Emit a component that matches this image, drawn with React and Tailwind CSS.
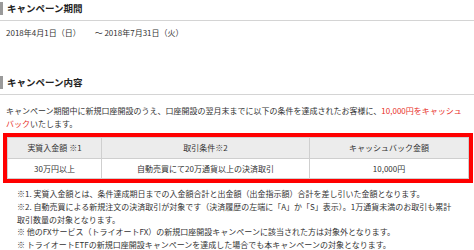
import React from 'react';

// Section heading with left grey bar and bottom rule
const Heading = ({ children }) => (
  <div className="h-[21px] border-b border-[#d4d4d4] pt-[2px]">
    <div className="h-[13px] border-l-[3px] border-[#9a9a9a] pl-[4px] text-[9.5px] leading-[13px] font-bold text-[#222]">
      {children}
    </div>
  </div>
);

const notes = [
  '※1. 実質入金額とは、条件達成期日までの入金額合計と出金額（出金指示額）合計を差し引いた金額となります。',
  '※2. 自動売買による新規注文の決済取引が対象です（決済履歴の左端に「A」か「S」表示）。1万通貨未満のお取引も累計',
  '取引数量の対象となります。',
  '※ 他のFXサービス（トライオートFX）の新規口座開設キャンペーンに該当された方は対象外となります。',
  '※ トライオートETFの新規口座開設キャンペーンを達成した場合でも本キャンペーンの対象となります。',
];

function App() {
  return (
    <div
      className="w-[474px] h-[250px] overflow-hidden bg-white text-[#333]"
      style={{ fontFamily: '"Noto Sans CJK JP", "Noto Sans", sans-serif' }}
    >
      <Heading>キャンペーン期間</Heading>
      <div className="mt-[6px] pl-[6px] text-[8px] leading-[12px] whitespace-nowrap">
        2018年4月1日（日）<span className="inline-block w-[14px]" />～ 2018年7月31日（火）
      </div>

      <div className="mt-[35px]">
        <Heading>キャンペーン内容</Heading>
      </div>
      <p className="mt-[9px] pl-[6px] text-[8px] leading-[13px] whitespace-nowrap">
        キャンペーン期間中に新規口座開設のうえ、口座開設の翌月末までに以下の条件を達成されたお客様に、
        <span className="text-[#e8302a]">10,000円をキャッシュ</span>
        <br />
        <span className="text-[#e8302a]">バック</span>いたします。
      </p>

      <div className="mt-[3px] ml-[3px] w-[470px] border-4 border-[#ff0000]">
        <table className="w-full table-fixed border-collapse text-[8px] text-center">
          <colgroup>
            <col className="w-[94px]" />
            <col className="w-[208px]" />
            <col />
          </colgroup>
          <thead>
            <tr className="h-[21px] bg-[#ececec]">
              <th className="border border-[#cfcfcf] font-normal">実質入金額 ※1</th>
              <th className="border border-[#cfcfcf] font-normal">取引条件※2</th>
              <th className="border border-[#cfcfcf] font-normal">キャッシュバック金額</th>
            </tr>
          </thead>
          <tbody>
            <tr className="h-[20px] bg-white">
              <td className="border border-[#cfcfcf]">30万円以上</td>
              <td className="border border-[#cfcfcf]">自動売買にて20万通貨以上の決済取引</td>
              <td className="border border-[#cfcfcf]">10,000円</td>
            </tr>
          </tbody>
        </table>
      </div>

      <div className="mt-[5px] pl-[17px] text-[8px] leading-[12.75px] whitespace-nowrap">
        {notes.map((n, i) => (
          <div key={i}>{n}</div>
        ))}
      </div>
    </div>
  );
}

export default App;
